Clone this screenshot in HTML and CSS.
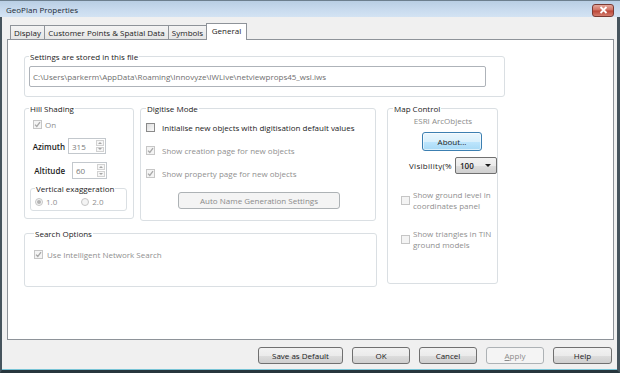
FILE: index.html
```html
<!DOCTYPE html>
<html lang="en">
<head>
    <meta charset="UTF-8">
    <title>GeoPlan Properties</title>
    <link rel="stylesheet" href="styles.css">
</head>
<body>
    <div class="window">
        <div class="titlebar">
            <span class="title">GeoPlan Properties</span>
            <span class="close">
                <svg width="9" height="8" viewBox="0 0 9 8"><path d="M1.5 1 L7.5 7 M7.5 1 L1.5 7" stroke="#fff" stroke-width="1.8"/></svg>
            </span>
        </div>
        <div class="client">
            <div class="tabs">
                <div class="tab t-display">Display</div>
                <div class="tab t-customer">Customer Points &amp; Spatial Data</div>
                <div class="tab t-symbols">Symbols</div>
                <div class="tab t-general active">General</div>
            </div>
            <div class="panel">
                <fieldset class="group settings">
                    <legend>Settings are stored in this file</legend>
                    <div class="textbox">C:\Users\parkerm\AppData\Roaming\Innovyze\IWLive\netviewprops45_wsl.iws</div>
                </fieldset>

                <div class="main">
                    <div class="left-col">
                        <div class="top-row">
                            <fieldset class="group hill">
                                <legend>Hill Shading</legend>
                                <label class="check-row on-row dis">
                                    <span class="cb dis"><svg viewBox="0 0 7 7"><path d="M1 3.6 L2.8 5.5 L6 1.2"/></svg></span>On
                                </label>
                                <div class="field azimuth">
                                    <span class="field-label">Azimuth</span>
                                    <span class="spin"><span class="spin-val">315</span><span class="spin-btns"><span class="up"></span><span class="down"></span></span></span>
                                </div>
                                <div class="field altitude">
                                    <span class="field-label">Altitude</span>
                                    <span class="spin"><span class="spin-val">60</span><span class="spin-btns"><span class="up"></span><span class="down"></span></span></span>
                                </div>
                                <fieldset class="group vert">
                                    <legend>Vertical exaggeration</legend>
                                    <div class="radios">
                                        <label class="radio dis"><span class="rb checked"></span>1.0</label>
                                        <label class="radio dis"><span class="rb"></span>2.0</label>
                                    </div>
                                </fieldset>
                            </fieldset>

                            <fieldset class="group digitise">
                                <legend>Digitise Mode</legend>
                                <label class="check-row first">
                                    <span class="cb"></span>Initialise new objects with digitisation default values
                                </label>
                                <label class="check-row dis">
                                    <span class="cb dis"><svg viewBox="0 0 7 7"><path d="M1 3.6 L2.8 5.5 L6 1.2"/></svg></span>Show creation page for new objects
                                </label>
                                <label class="check-row dis">
                                    <span class="cb dis"><svg viewBox="0 0 7 7"><path d="M1 3.6 L2.8 5.5 L6 1.2"/></svg></span>Show property page for new objects
                                </label>
                                <div class="btn dis auto-name">Auto Name Generation Settings</div>
                            </fieldset>
                        </div>

                        <fieldset class="group search">
                            <legend>Search Options</legend>
                            <label class="check-row dis">
                                <span class="cb dis"><svg viewBox="0 0 7 7"><path d="M1 3.6 L2.8 5.5 L6 1.2"/></svg></span>Use Intelligent Network Search
                            </label>
                        </fieldset>
                    </div>

                    <fieldset class="group map">
                        <legend>Map Control</legend>
                        <div class="esri">ESRI ArcObjects</div>
                        <div class="btn focus about">About...</div>
                        <div class="visibility">
                            <span class="vis-label">Visibility(%</span>
                            <span class="select">100<span class="arrow"></span></span>
                        </div>
                        <label class="check-row multi dis">
                            <span class="cb dis"></span><span>Show ground level in<br>coordinates panel</span>
                        </label>
                        <label class="check-row multi dis">
                            <span class="cb dis"></span><span>Show triangles in TIN<br>ground models</span>
                        </label>
                    </fieldset>
                </div>
            </div>

            <div class="buttons">
                <div class="btn b-save">Save as Default</div>
                <div class="btn b-std">OK</div>
                <div class="btn b-std">Cancel</div>
                <div class="btn b-std dis"><u>A</u>pply</div>
                <div class="btn b-help">Help</div>
            </div>
        </div>
    </div>
</body>
</html>
```

FILE: styles.css
```css
* {
    box-sizing: border-box;
}
body {
    margin: 0;
    font-family: "Open Sans", "Noto Sans", sans-serif;
    font-size: 8px;
    line-height: 11px;
    color: #1b1b1b;
}
.window {
    width: 620px;
    height: 373px;
    display: flex;
    flex-direction: column;
    background: #f0f0f0;
    border-left: 2px solid #46545d;
    border-right: 3px solid #46545d;
    border-bottom: 3px solid #27363d;
    box-shadow: inset 0 -1px 0 #78c4d6;
}
.titlebar {
    height: 17px;
    margin: 0 -3px 0 -2px;
    padding: 0 6px 0 6px;
    display: flex;
    align-items: center;
    justify-content: space-between;
    background: linear-gradient(#b9cee4, #cadcef 60%, #d3e3f3);
    border-top: 1px solid #6d7f8e;
}
.title {
    color: #1d2a36;
}
.close {
    width: 22px;
    height: 13px;
    margin-top: 2px;
    border: 1px solid #7a3a33;
    border-radius: 3px;
    background: linear-gradient(#e4a79b, #cf6f60 48%, #b94435 52%, #d47c6d);
    display: flex;
    align-items: center;
    justify-content: center;
}

.client {
    flex: 1;
    display: flex;
    flex-direction: column;
    padding: 6px 3px 0 5px;
}
.tabs {
    display: flex;
    align-items: flex-end;
    height: 16px;
    padding-left: 3px;
    position: relative;
    z-index: 1;
}
.tab {
    height: 14px;
    border: 1px solid #8e9399;
    border-bottom: none;
    margin-left: -1px;
    background: linear-gradient(#f4f4f4, #e5e5e5);
    text-align: center;
    line-height: 13px;
    white-space: nowrap;
}
.tab:first-child {
    margin-left: 0;
}
.t-display { width: 35px; }
.t-customer { width: 125px; }
.t-symbols { width: 39px; }
.t-general { width: 41px; }
.tab.active {
    height: 17px;
    margin: 0 -2px 0 -1px;
    background: #fff;
    line-height: 14px;
    position: relative;
    top: 1px;
}
.panel {
    height: 301px;
    border: 1px solid #8e9399;
    background: #fff;
    padding: 11px 0 0 16px;
}

.group {
    margin: 0;
    border: 1px solid #dadfe3;
    border-radius: 3px;
    padding: 0 4px 0 4px;
    min-width: 0;
}
.group legend {
    padding: 0 1px;
    line-height: 11px;
}
.settings {
    width: 481px;
    padding: 4px 0 9px 4px;
}
.textbox {
    width: 457px;
    height: 21px;
    border: 1px solid #aeb3b9;
    border-radius: 2px;
    padding: 4px 3px;
    color: #6e6e6e;
    white-space: nowrap;
    overflow: hidden;
}

.main {
    display: flex;
    gap: 10px;
    margin-top: 6px;
}
.left-col {
    display: flex;
    flex-direction: column;
    gap: 7px;
}
.top-row {
    display: flex;
    gap: 6px;
    align-items: flex-start;
}

.check-row {
    display: flex;
    align-items: center;
    gap: 6px;
    height: 11px;
    white-space: nowrap;
}
.dis {
    color: #8f8f8f;
}
.cb {
    width: 9px;
    height: 9px;
    flex: none;
    border: 1px solid #8a8a8a;
    background: linear-gradient(135deg, #dcdcdc, #fbfbfb);
    display: flex;
    align-items: center;
    justify-content: center;
}
.cb.dis {
    border-color: #c6c6c6;
    background: #f4f4f4;
}
.cb svg {
    width: 7px;
    height: 7px;
    fill: none;
    stroke: #a8a8a8;
    stroke-width: 1.3;
}

.hill {
    width: 110px;
    height: 116px;
}
.on-row {
    margin: 5px 0 0 4px;
    gap: 3px;
}
.field {
    display: flex;
    align-items: center;
    gap: 3px;
}
.field-label {
    font-weight: 600;
    text-align: right;
}
.azimuth {
    margin-top: 8px;
}
.azimuth .field-label {
    width: 36px;
}
.azimuth .spin {
    width: 38px;
    height: 16px;
}
.altitude {
    margin-top: 8px;
}
.altitude .field-label {
    width: 36px;
}
.altitude .spin {
    width: 35px;
    height: 17px;
    margin-left: 4px;
}
.spin {
    display: flex;
    border: 1px solid #c3c8cd;
    color: #7a7a7a;
}
.spin-val {
    flex: 1;
    padding: 2px 0 0 3px;
}
.spin-btns {
    width: 9px;
    display: flex;
    flex-direction: column;
    gap: 1px;
    padding: 1px 1px 1px 0;
}
.spin-btns span {
    flex: 1;
    border: 1px solid #d2d2d2;
    background: #f6f6f6;
    display: flex;
    align-items: center;
    justify-content: center;
}
.spin-btns .up::after {
    content: "";
    border: 2px solid transparent;
    border-bottom: 2px solid #a6a6a6;
    border-top: none;
}
.spin-btns .down::after {
    content: "";
    border: 2px solid transparent;
    border-top: 2px solid #a6a6a6;
    border-bottom: none;
}

.vert {
    width: 97px;
    margin: 4px 0 0 1px;
    padding: 2px 0 3px 4px;
}
.radios {
    display: flex;
    gap: 24px;
}
.radio {
    display: flex;
    align-items: center;
    gap: 3px;
}
.rb {
    width: 8px;
    height: 8px;
    border: 1px solid #c6c6c6;
    border-radius: 50%;
    background: #f4f4f4;
    display: flex;
    align-items: center;
    justify-content: center;
}
.rb.checked::after {
    content: "";
    width: 4px;
    height: 4px;
    border-radius: 50%;
    background: #b4b4b4;
}

.digitise {
    width: 236px;
    height: 118px;
    padding-left: 5px;
}
.digitise .check-row {
    margin-top: 12px;
    gap: 7px;
}
.digitise .check-row.first {
    margin-top: 8px;
}

.btn {
    height: 17px;
    border: 1px solid #707070;
    border-radius: 3px;
    background: linear-gradient(#f2f2f2, #ebebeb 50%, #dddddd 51%, #cfcfcf);
    display: flex;
    align-items: center;
    justify-content: center;
    white-space: nowrap;
}
.btn.dis {
    border-color: #adb2b5;
    background: #f4f4f4;
    color: #8a8a8a;
}
.btn.focus {
    border-color: #3c7fb1;
    background: linear-gradient(#eaf6fd, #d9f0fc 50%, #bee6fd 51%, #a7d9f5);
    box-shadow: inset 0 0 0 1px rgba(255,255,255,0.6);
}
.auto-name {
    width: 162px;
    margin: 13px 0 0 32px;
}

.search {
    width: 353px;
    height: 59px;
    padding-left: 9px;
}
.search .check-row {
    margin-top: 10px;
    gap: 4px;
}

.map {
    width: 111px;
    height: 181px;
    padding-left: 5px;
}
.esri {
    text-align: center;
    color: #8c8c8c;
    margin-top: 1px;
}
.about {
    width: 60px;
    height: 19px;
    margin: 6px 0 0 29px;
}
.visibility {
    display: flex;
    align-items: center;
    margin: 6px 0 0 16px;
}
.vis-label {
    width: 46px;
    letter-spacing: 0.3px;
    white-space: nowrap;
}
.select {
    width: 42px;
    height: 17px;
    flex: none;
    margin-right: -4px;
    border: 1px solid #707070;
    border-radius: 2px;
    background: linear-gradient(#f2f2f2, #ebebeb 50%, #dddddd 51%, #cfcfcf);
    display: flex;
    align-items: center;
    justify-content: space-between;
    padding: 0 5px 0 4px;
    font-weight: 600;
}
.arrow {
    border: 3px solid transparent;
    border-top: 3px solid #1b1b1b;
    border-bottom: none;
}
.map .check-row.multi {
    height: 22px;
    margin: 15px 0 0 8px;
    gap: 3px;
    align-items: center;
    white-space: nowrap;
}
.map .check-row.multi + .check-row.multi {
    margin-top: 17px;
}

.buttons {
    display: flex;
    justify-content: flex-end;
    gap: 9px;
    margin-top: 7px;
    padding-right: 2px;
}
.b-save { width: 85px; }
.b-std { width: 58px; }
.b-help { width: 59px; }
```
